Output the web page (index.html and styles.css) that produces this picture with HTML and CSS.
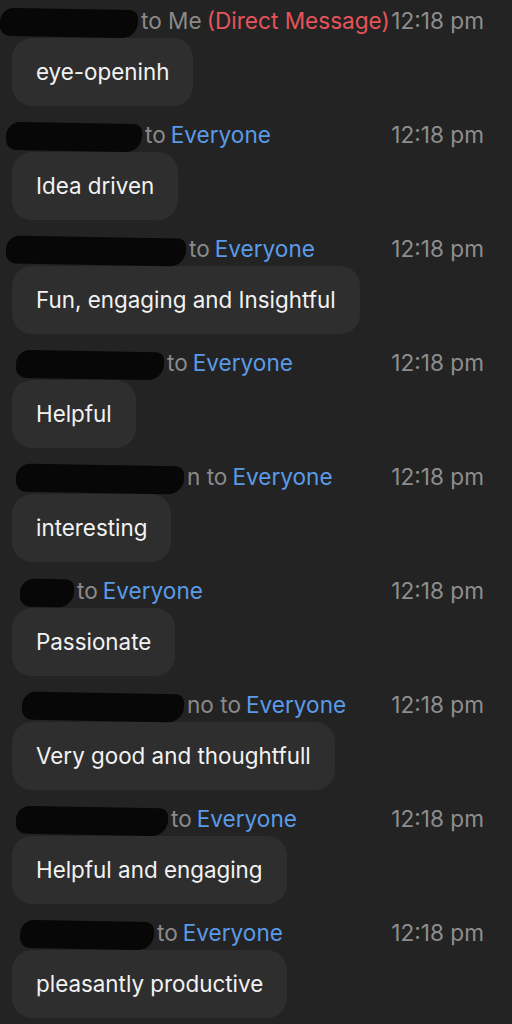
FILE: index.html
```html
<!DOCTYPE html>
<html>
<head>
    <link rel="stylesheet" href="styles.css">
</head>
<body>
    <div class="chat">
        <div class="msg">
            <div class="meta">
                <span class="who"><span class="blot" style="width:138px;margin-left:-12px"></span>to Me <span class="dm">(Direct Message)</span></span>
                <span class="time">12:18 pm</span>
            </div>
            <div class="bubble">eye-openinh</div>
        </div>

        <div class="msg">
            <div class="meta">
                <span class="who"><span class="blot" style="width:136px;margin-left:-6px"></span>to <span class="to">Everyone</span></span>
                <span class="time">12:18 pm</span>
            </div>
            <div class="bubble">Idea driven</div>
        </div>

        <div class="msg">
            <div class="meta">
                <span class="who"><span class="blot" style="width:180px;margin-left:-6px"></span>to <span class="to">Everyone</span></span>
                <span class="time">12:18 pm</span>
            </div>
            <div class="bubble">Fun, engaging and Insightful</div>
        </div>

        <div class="msg">
            <div class="meta">
                <span class="who"><span class="blot" style="width:148px;margin-left:4px"></span>to <span class="to">Everyone</span></span>
                <span class="time">12:18 pm</span>
            </div>
            <div class="bubble">Helpful</div>
        </div>

        <div class="msg">
            <div class="meta">
                <span class="who"><span class="blot" style="width:168px;margin-left:4px"></span>n to <span class="to">Everyone</span></span>
                <span class="time">12:18 pm</span>
            </div>
            <div class="bubble">interesting</div>
        </div>

        <div class="msg">
            <div class="meta">
                <span class="who"><span class="blot" style="width:54px;margin-left:8px"></span>to <span class="to">Everyone</span></span>
                <span class="time">12:18 pm</span>
            </div>
            <div class="bubble">Passionate</div>
        </div>

        <div class="msg">
            <div class="meta">
                <span class="who"><span class="blot" style="width:162px;margin-left:10px"></span>no to <span class="to">Everyone</span></span>
                <span class="time">12:18 pm</span>
            </div>
            <div class="bubble">Very good and thoughtfull</div>
        </div>

        <div class="msg">
            <div class="meta">
                <span class="who"><span class="blot" style="width:152px;margin-left:4px"></span>to <span class="to">Everyone</span></span>
                <span class="time">12:18 pm</span>
            </div>
            <div class="bubble">Helpful and engaging</div>
        </div>

        <div class="msg">
            <div class="meta">
                <span class="who"><span class="blot" style="width:134px;margin-left:8px"></span>to <span class="to">Everyone</span></span>
                <span class="time">12:18 pm</span>
            </div>
            <div class="bubble">pleasantly productive</div>
        </div>
    </div>
</body>
</html>
```

FILE: styles.css
```css
html, body {
    margin: 0;
    background: #232323;
}

body {
    font-family: Inter, "Liberation Sans", sans-serif;
    overflow: hidden;
}

.chat {
    padding: 8px 28px 0 12px;
}

.msg {
    margin-bottom: 16px;
}

.meta {
    display: flex;
    justify-content: space-between;
    align-items: center;
    height: 24px;
    font-size: 22.6px;
    color: #8a8a8a;
    white-space: nowrap;
}

.who {
    display: flex;
    align-items: center;
}

.blot {
    display: inline-block;
    height: 28px;
    margin-right: 3px;
    margin-top: 6px;
    background: #070707;
    border-radius: 14px 8px 16px 10px;
    transform: rotate(1deg);
}

.to {
    color: #5a9be8;
    margin-left: 5px;
}

.dm {
    color: #e5545a;
    margin-left: 5px;
}

.time {
    color: #8e8e8e;
    flex-shrink: 0;
}

.bubble {
    display: inline-block;
    margin-top: 6px;
    height: 68px;
    line-height: 68px;
    padding: 0 24px;
    background: #2e2e2e;
    border-radius: 20px;
    color: #f2f2f2;
    font-size: 22.4px;
}
```
